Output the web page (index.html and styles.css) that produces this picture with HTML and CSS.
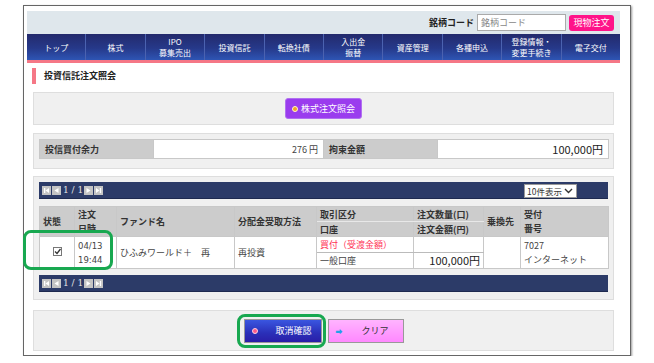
FILE: index.html
```html
<!DOCTYPE html>
<html lang="ja">
<head>
	<meta charset="UTF-8">
	<title>投資信託注文照会</title>
	<link rel="stylesheet" href="styles.css">
</head>
<body>
	<div class="frame">
		<!-- ヘッダー -->
		<div class="header">
			<div class="search">
				<span class="search-label">銘柄コード</span>
				<input class="search-input" type="text" placeholder="銘柄コード">
				<span class="btn-order">現物注文</span>
			</div>
			<ul class="nav">
				<li>トップ</li>
				<li>株式</li>
				<li>IPO<br>募集売出</li>
				<li>投資信託</li>
				<li>転換社債</li>
				<li>入出金<br>振替</li>
				<li>資産管理</li>
				<li>各種申込</li>
				<li>登録情報・<br>変更手続き</li>
				<li>電子交付</li>
			</ul>
		</div>

		<!-- タイトル -->
		<h1 class="title">投資信託注文照会</h1>

		<div class="panel panel-link">
			<span class="btn-purple"><i class="dot-orange"></i>株式注文照会</span>
		</div>

		<div class="panel panel-power">
			<table class="power">
				<colgroup>
					<col style="width:114px"><col style="width:170px"><col style="width:114px"><col style="width:171px">
				</colgroup>
				<tr>
					<th class="power-label">投信買付余力</th>
					<td class="power-value">276 円</td>
					<th class="power-label">拘束金額</th>
					<td class="power-value big">100,000円</td>
				</tr>
			</table>
		</div>

		<div class="panel panel-list">
			<div class="pager">
				<span class="pg-btn"><svg width="9" height="9"><rect x="2" y="2" width="1.3" height="5" fill="#fff"/><path d="M7 2 L3.5 4.5 L7 7 Z" fill="#fff"/></svg></span>
				<span class="pg-btn"><svg width="9" height="9"><path d="M6.5 2 L2.5 4.5 L6.5 7 Z" fill="#fff"/></svg></span>
				<span class="pg-text">1 / 1</span>
				<span class="pg-btn"><svg width="9" height="9"><path d="M2.5 2 L6.5 4.5 L2.5 7 Z" fill="#fff"/></svg></span>
				<span class="pg-btn"><svg width="9" height="9"><path d="M2 2 L5.5 4.5 L2 7 Z" fill="#fff"/><rect x="5.8" y="2" width="1.3" height="5" fill="#fff"/></svg></span>
				<span class="pg-select">10件表示 <svg width="9" height="6"><path d="M1 1 L4.5 4.5 L8 1" stroke="#333" stroke-width="1.4" fill="none"/></svg></span>
			</div>
			<table class="orders">
				<colgroup>
					<col style="width:35px"><col style="width:42px"><col style="width:118px"><col style="width:82px">
					<col style="width:97px"><col style="width:70px"><col style="width:37px"><col style="width:88px">
				</colgroup>
				<tr class="head">
					<th rowspan="2">状態</th>
					<th rowspan="2" class="two">注文<br>日時</th>
					<th rowspan="2">ファンド名</th>
					<th rowspan="2">分配金受取方法</th>
					<th class="sub-top">取引区分</th>
					<th class="sub-top">注文数量(口)</th>
					<th rowspan="2">乗換先</th>
					<th rowspan="2" class="two">受付<br>番号</th>
				</tr>
				<tr class="head">
					<th class="sub-bottom">口座</th>
					<th class="sub-bottom">注文金額(円)</th>
				</tr>
				<tr class="row">
					<td rowspan="2" class="center"><svg width="9" height="9"><rect x="0.5" y="0.5" width="8" height="8" fill="#fff" stroke="#777"/><path d="M2 4.5 L4 6.5 L7.5 2" stroke="#333" stroke-width="1.3" fill="none"/></svg></td>
					<td rowspan="2" class="num two">04/13<br>19:44</td>
					<td rowspan="2">ひふみワールド＋　再</td>
					<td rowspan="2">再投資</td>
					<td class="sub-top red">買付（受渡金額）</td>
					<td class="sub-top"></td>
					<td rowspan="2"></td>
					<td rowspan="2" class="two">7027<br>インターネット</td>
				</tr>
				<tr class="row">
					<td class="sub-bottom">一般口座</td>
					<td class="sub-bottom amount">100,000円</td>
				</tr>
			</table>
			<div class="pager">
				<span class="pg-btn"><svg width="9" height="9"><rect x="2" y="2" width="1.3" height="5" fill="#fff"/><path d="M7 2 L3.5 4.5 L7 7 Z" fill="#fff"/></svg></span>
				<span class="pg-btn"><svg width="9" height="9"><path d="M6.5 2 L2.5 4.5 L6.5 7 Z" fill="#fff"/></svg></span>
				<span class="pg-text">1 / 1</span>
				<span class="pg-btn"><svg width="9" height="9"><path d="M2.5 2 L6.5 4.5 L2.5 7 Z" fill="#fff"/></svg></span>
				<span class="pg-btn"><svg width="9" height="9"><path d="M2 2 L5.5 4.5 L2 7 Z" fill="#fff"/><rect x="5.8" y="2" width="1.3" height="5" fill="#fff"/></svg></span>
			</div>
		</div>

		<div class="panel panel-actions">
			<span class="btn-cancel"><i class="dot-pink"></i>取消確認</span>
			<span class="btn-clear"><i class="arrow-blue">➡</i>クリア</span>
		</div>

		<!-- 強調枠 -->
		<div class="mark mark-row"></div>
		<div class="mark mark-btn"></div>
	</div>
</body>
</html>
```

FILE: styles.css
```css
*{
	box-sizing: border-box;
}
body{
	margin: 0;
	background: #fff;
	font-family: "Noto Sans CJK JP", "DejaVu Sans", sans-serif;
	font-size: 9px;
	color: #333;
}
.frame{
	position: relative;
	margin: 5px 0 0 23px;
	width: 608px;
	height: 351px;
	border: 1px solid #666;
	box-shadow: 1px 1px 2px #999;
	padding: 5px 10px 0 3px;
}

/* ヘッダー */
.header{
	background: #dfe7ec;
}
.search{
	height: 23px;
	display: flex;
	align-items: center;
	justify-content: flex-end;
	padding-right: 6px;
}
.search-label{
	font-weight: bold;
	color: #222;
	margin-right: 3px;
}
.search-input{
	width: 89px;
	height: 17px;
	border: 1px solid #aaa;
	font-family: inherit;
	font-size: 9px;
	padding: 0 3px;
	margin: 0 3px 0 0;
}
.search-input::placeholder{
	color: #888;
}
.btn-order{
	width: 45px;
	height: 16px;
	line-height: 16px;
	text-align: center;
	background: #ff1489;
	color: #fff;
	border-radius: 3px;
}
.nav{
	list-style: none;
	margin: 0;
	padding: 0;
	display: flex;
	height: 29px;
	background: linear-gradient(#232a6c, #26398a 55%, #2e55b4);
	border-bottom: 3px solid #f57786;
}
.nav li{
	flex: 1;
	display: flex;
	align-items: center;
	justify-content: center;
	text-align: center;
	color: #fff;
	font-size: 8px;
	line-height: 11px;
	border-right: 1px solid #4b62b0;
}
.nav li:last-child{
	border-right: none;
}

/* タイトル */
.title{
	margin: 5px 0 0 5px;
	height: 16px;
	border-left: 4px solid #f57786;
	padding-left: 8px;
	font-size: 9px;
	line-height: 16px;
	color: #222;
}

.panel{
	margin: 8px 6px 0 6px;
	background: #f0f0f0;
	border: 1px solid #dedede;
}
.panel-link{
	height: 33px;
	display: flex;
	align-items: center;
	justify-content: center;
}
.btn-purple{
	height: 21px;
	padding: 0 6px;
	display: flex;
	align-items: center;
	background: #9a3cee;
	color: #fff;
	border-radius: 3px;
	border: 1px solid #b070f0;
}
.dot-orange{
	width: 6px;
	height: 6px;
	border-radius: 50%;
	background: #f5a623;
	border: 1px solid #fff6d0;
	margin-right: 3px;
}

.panel-power{
	height: 36px;
	padding: 5px 5px 0;
}
.power{
	width: 100%;
	border-collapse: collapse;
	table-layout: fixed;
	height: 20px;
}
.power th, .power td{
	border: 1px solid #c8c8c8;
	padding: 0 5px;
}
.power-label{
	background: #cccccc;
	text-align: left;
	font-weight: bold;
	color: #333;
}
.power-value{
	background: #fff;
	text-align: right;
	color: #444;
}
.power-value.big{
	font-size: 11px;
	color: #222;
}

.panel-list{
	margin-top: 7px;
	height: 124px;
	padding: 5px 5px 0;
}
.pager{
	position: relative;
	height: 17px;
	background: #2c3b68;
	display: flex;
	align-items: center;
	padding-left: 3px;
	border-bottom: 1px solid #1e2a50;
}
.pg-btn{
	width: 9px;
	height: 9px;
	background: #c4c4c4;
	margin-right: 1px;
	display: flex;
}
.pg-text{
	color: #e6e6e6;
	font-family: "DejaVu Serif", serif;
	font-size: 9px;
	margin: 0 1px;
}
.pg-select{
	position: absolute;
	right: 31px;
	top: 2px;
	width: 53px;
	height: 14px;
	background: #fff;
	border: 1px solid #999;
	font-size: 8.5px;
	line-height: 12px;
	padding-left: 2px;
	display: flex;
	align-items: center;
	justify-content: space-between;
	padding-right: 3px;
}
.orders{
	width: 100%;
	border-collapse: collapse;
	table-layout: fixed;
	margin: 7px 0 6px;
}
.orders th, .orders td{
	border: 1px solid #c8c8c8;
	padding: 0 3px;
	text-align: left;
	vertical-align: middle;
	line-height: 13px;
}
.orders th{
	background: #cccccc;
	color: #333;
	height: 15px;
	font-weight: bold;
}
.orders td{
	background: #fff;
	height: 16px;
	color: #444;
}
.orders .two{
	line-height: 14px;
}
.orders th.sub-top, .orders td.sub-top{
	border-bottom: 1px solid #e8e8e8;
}
.orders td.sub-top{
	border-bottom-color: #bbb;
}
.orders .center{
	text-align: center;
}
.orders .num{
	font-family: "DejaVu Sans", sans-serif;
	font-size: 8.5px;
}
.orders .red{
	color: #ff3355;
}
.orders .amount{
	text-align: right;
	font-size: 11px;
	color: #222;
}

.panel-actions{
	margin-top: 10px;
	height: 41px;
	display: flex;
	align-items: center;
	justify-content: center;
	gap: 6px;
}
.btn-cancel, .btn-clear{
	width: 78px;
	height: 24px;
	display: flex;
	align-items: center;
	padding-left: 7px;
	border: 1px solid #999;
}
.btn-cancel{
	background: linear-gradient(#3a56e0, #2a2fb8 60%, #2a1ea8);
	color: #fff;
}
.btn-clear{
	width: 76px;
	background: linear-gradient(#ffb4ff, #ff88ff);
	color: #333;
}
.dot-pink{
	width: 6px;
	height: 6px;
	border-radius: 50%;
	background: #ff5a8a;
	border: 1px solid #ffd0e0;
	margin-right: 18px;
}
.arrow-blue{
	font-style: normal;
	color: #22a0e8;
	font-size: 7px;
	margin-right: 19px;
}

/* 強調枠 */
.mark{
	position: absolute;
	border: 3px solid #18a850;
	border-radius: 8px;
}
.mark-row{
	left: -1px;
	top: 224px;
	width: 90px;
	height: 40px;
}
.mark-btn{
	left: 213px;
	top: 308px;
	width: 89px;
	height: 34px;
}
```
